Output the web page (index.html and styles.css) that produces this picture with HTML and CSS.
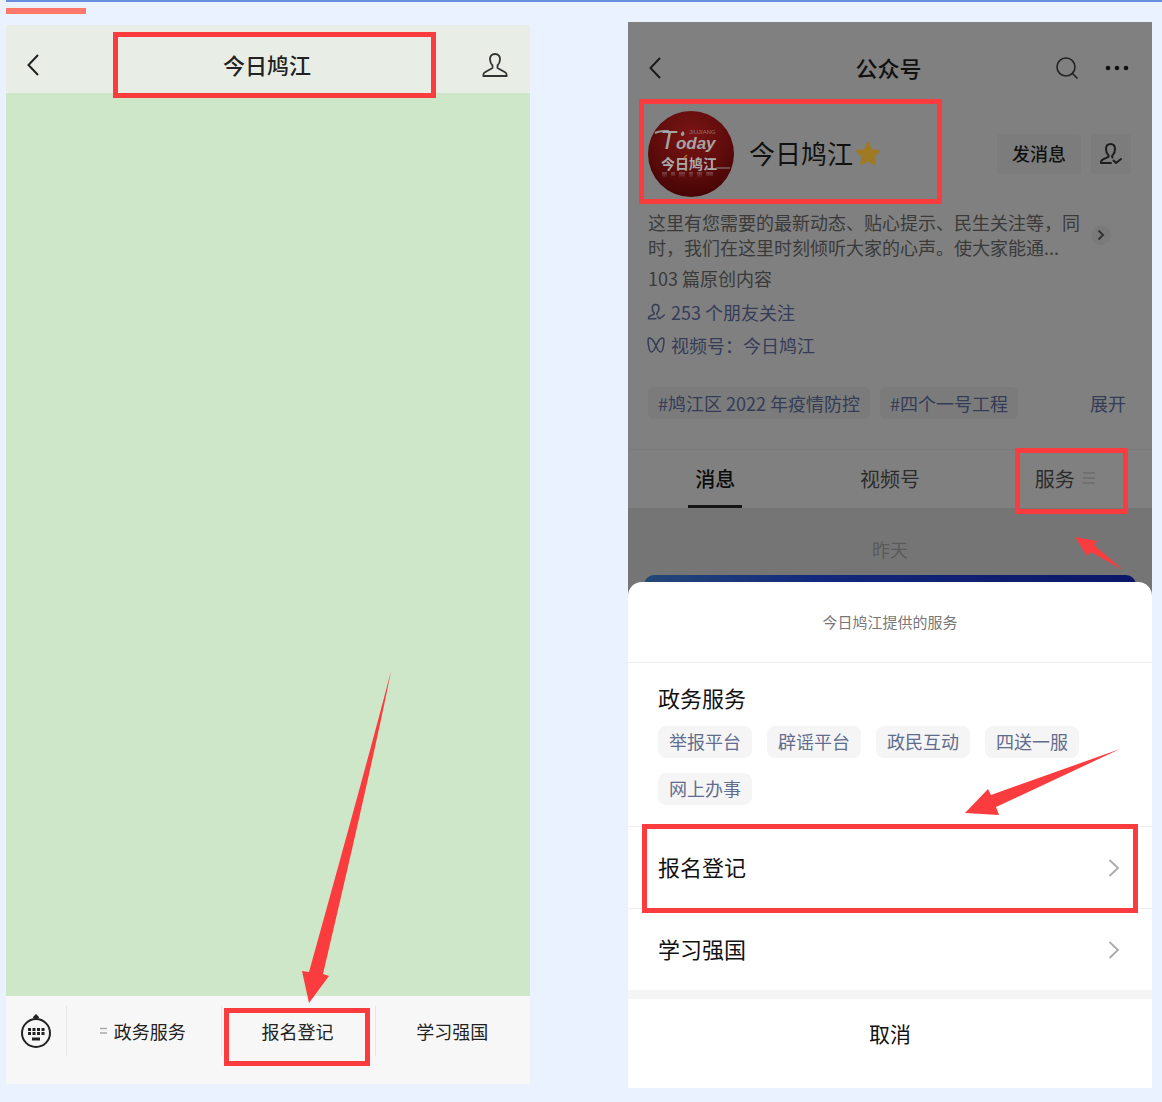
FILE: index.html
```
<!DOCTYPE html>
<html lang="zh-CN">
<head>
  <meta charset="UTF-8">
  <title>今日鸠江</title>
  <meta name="viewport" content="width=device-width, initial-scale=1" />
  <link rel="stylesheet" href="styles.css">
</head>
<body>
  <div class="top-line"></div>
  <div class="top-accent"></div>

  <main class="screens">
    <!-- chat screen -->
    <section class="phone chat">
      <header class="chat-header">
        <button class="icon-btn" aria-label="返回">
          <svg width="14" height="24" viewBox="0 0 14 24" fill="none" stroke="#222" stroke-width="2"><path d="M12 2 2.500 12 12 22"/></svg>
        </button>
        <h1>今日鸠江</h1>
        <button class="icon-btn" aria-label="资料">
          <svg width="26" height="26" viewBox="0 0 26 26" fill="none" stroke="#333" stroke-width="1.800" stroke-linejoin="round"><path d="M13 2C9.500 2 7.800 4.500 8 7.500c.2 3 1 4.500 2.500 6v2.500L2.500 20.500C1.500 21 1.300 22 1.300 24h23.400c0-2-.2-3-1.200-3.500L15.500 16v-2.500c1.500-1.500 2.300-3 2.500-6C18.200 4.500 16.500 2 13 2z"/></svg>
        </button>
      </header>
      <div class="chat-body"></div>
      <nav class="chat-menu">
        <button class="keyboard" aria-label="键盘">
          <svg width="32" height="36" viewBox="0 0 32 36" fill="none" stroke="#222" stroke-width="2">
            <circle cx="16" cy="20" r="14"/>
            <path d="M13.500 5 16 2.500 18.500 5" fill="#222"/>
            <path d="M8 16.500h3m1.500 0h3m1.500 0h3m1.500 0h3M8 20.500h3m1.500 0h3m1.500 0h3m1.500 0h3" stroke-width="3"/>
            <path d="M12 26h8" stroke-width="3"/>
          </svg>
        </button>
        <button class="menu-item">
          <svg width="7" height="8" viewBox="0 0 7 8" stroke="#aaa" stroke-width="1.500"><path d="M0 1.500h7M0 6h7"/></svg>
          政务服务
        </button>
        <button class="menu-item">报名登记</button>
        <button class="menu-item">学习强国</button>
      </nav>

      <div class="mark mark-title"></div>
      <div class="mark mark-menu"></div>
      <svg class="arrow arrow-long" width="90" height="332" viewBox="0 0 90 332"><path d="M89 0Q75 73 21 303l6 2L7 332 0 300l7 1Q67 85 89 0z"/></svg>
    </section>

    <!-- account screen with the service sheet open -->
    <section class="phone account">
      <header class="account-header">
        <button class="icon-btn" aria-label="返回">
          <svg width="14" height="24" viewBox="0 0 14 24" fill="none" stroke="#1a1a1a" stroke-width="2"><path d="M12 2 2.500 12 12 22"/></svg>
        </button>
        <h2>公众号</h2>
        <div class="header-tools">
          <button class="icon-btn" aria-label="搜索">
            <svg width="24" height="24" viewBox="0 0 24 24" fill="none" stroke="#222" stroke-width="1.600"><circle cx="11" cy="11" r="9"/><path d="m17.500 17.500 5 5"/></svg>
          </button>
          <button class="icon-btn" aria-label="更多">
            <svg width="24" height="24" viewBox="0 0 24 24" fill="#111"><circle cx="3" cy="12" r="2.300"/><circle cx="12" cy="12" r="2.300"/><circle cx="21" cy="12" r="2.300"/></svg>
          </button>
        </div>
      </header>

      <div class="profile">
        <svg class="avatar" width="86" height="86" viewBox="0 0 86 86" role="img" aria-label="Today 今日鸠江">
          <defs>
            <radialGradient id="red" cx="50%" cy="28%" r="70%"><stop offset="0" stop-color="#7a1414"/><stop offset="0.6" stop-color="#600c0c"/><stop offset="1" stop-color="#480505"/></radialGradient>
            <linearGradient id="shine" x1="0" y1="0" x2="0" y2="1"><stop offset="0" stop-color="#a08080" stop-opacity="0.5"/><stop offset="1" stop-color="#a08080" stop-opacity="0"/></linearGradient>
          </defs>
          <circle cx="43" cy="43" r="43" fill="url(#red)"/>
          <path d="M7 22q4-2 9-2h5" fill="none" stroke="#999" stroke-width="2"/>
          <text x="12" y="38"><tspan class="logo-t">T</tspan><tspan class="logo-en">oday</tspan></text>
          <text x="41" y="23" class="logo-tiny">JIUJIANG</text>
          <path d="M34 25q-3-2 1-5 3 3 0 5z" fill="#999"/>
          <text x="13" y="58" class="logo-cn">今日鸠江</text>
          <path d="M68 57h14" stroke="#888" stroke-width="1"/>
          <path d="M14 61h5v6h-5zm9 0h4v4h-4zm8 0h6v6h-6zm10 0h4v5h-4zm8 0h5v6h-5zm9 0h7v4h-7z" fill="url(#shine)"/>
          <path d="m36 47 3-3" stroke="#a35b26" stroke-width="2"/>
        </svg>
        <h3>今日鸠江</h3>
        <svg class="star" width="26" height="26" viewBox="0 0 26 26" fill="#9f7a22" stroke="#9f7a22" stroke-width="2" stroke-linejoin="round"><path d="m13 2 3.300 7 7.700 1-5.600 5.300 1.400 7.700L13 19.300 6.200 23l1.400-7.700L2 10l7.700-1z"/></svg>
        <button class="send">发消息</button>
        <button class="follow" aria-label="已关注">
          <svg width="24" height="24" viewBox="0 0 24 24" fill="none" stroke="#1c1c1c" stroke-width="2" stroke-linecap="round" stroke-linejoin="round"><path d="M12 21H2c0-2 .5-3 2-3.600l5-2.200c1-.6.8-1.700 0-2.600C7.500 11 7 9 7 7c0-3.500 2-5 4.500-5S16 3.500 16 7c0 2-.5 4-2 5.600-1 1-1.200 2-.5 2.900M14.500 18.500 17 21l5-4"/></svg>
        </button>
      </div>

      <div class="about">
        <p class="intro">这里有您需要的最新动态、贴心提示、民生关注等，同时，我们在这里时刻倾听大家的心声。使大家能通...</p>
        <button class="more" aria-label="详情">
          <svg width="8" height="12" viewBox="0 0 8 12" fill="none" stroke="#333" stroke-width="2"><path d="m1.500 1.500 4.500 4.500-4.500 4.500"/></svg>
        </button>
      </div>
      <p class="count">103 篇原创内容</p>
      <a class="info" href="#">
        <svg width="18" height="18" viewBox="0 0 24 24" fill="none" stroke="#343c57" stroke-width="2" stroke-linecap="round" stroke-linejoin="round"><path d="M12 21H2c0-2 .5-3 2-3.600l5-2.200c1-.6.8-1.700 0-2.600C7.500 11 7 9 7 7c0-3.500 2-5 4.500-5S16 3.500 16 7c0 2-.5 4-2 5.600-1 1-1.200 2-.5 2.900M14.500 18.500 17 21l6-5"/></svg>
        253 个朋友关注
      </a>
      <a class="info" href="#">
        <svg width="18" height="18" viewBox="0 0 18 18" fill="none" stroke="#343c57" stroke-width="1.500" stroke-linejoin="round"><path d="M9 10C7 5 4.500 2 2.500 2 .5 2 1 6 1.500 9.500 2 13 3 16 4.500 16S7.500 13.500 9 10c2-5 4.500-8 6.500-8s1.500 4 1 7.500S15 16 13.500 16 10.500 13.500 9 10z"/></svg>
        视频号：今日鸠江
      </a>

      <div class="topics">
        <a class="topic" href="#">#鸠江区 2022 年疫情防控</a>
        <a class="topic" href="#">#四个一号工程</a>
        <button class="expand">展开</button>
      </div>

      <nav class="tabs">
        <button class="tab active">消息</button>
        <button class="tab">视频号</button>
        <button class="tab">服务
          <svg width="12" height="12" viewBox="0 0 12 12" stroke="#6c6c6c" stroke-width="1.500"><path d="M0 1h12M0 6h12M0 11h12"/></svg>
        </button>
      </nav>

      <div class="feed">
        <span class="day">昨天</span>
        <div class="card"></div>
      </div>

      <div class="sheet">
        <p class="sheet-title">今日鸠江提供的服务</p>
        <div class="group">
          <h3>政务服务</h3>
          <div class="chips">
            <button class="chip">举报平台</button>
            <button class="chip">辟谣平台</button>
            <button class="chip">政民互动</button>
            <button class="chip">四送一服</button>
            <button class="chip">网上办事</button>
          </div>
        </div>
        <a class="row" href="#"><span>报名登记</span>
          <svg width="12" height="18" viewBox="0 0 12 18" fill="none" stroke="#aaa" stroke-width="1.800"><path d="m1.500 1 8.500 8-8.500 8"/></svg>
        </a>
        <a class="row" href="#"><span>学习强国</span>
          <svg width="12" height="18" viewBox="0 0 12 18" fill="none" stroke="#aaa" stroke-width="1.800"><path d="m1.500 1 8.500 8-8.500 8"/></svg>
        </a>
        <button class="cancel">取消</button>
      </div>

      <div class="mark mark-profile"></div>
      <div class="mark mark-service"></div>
      <div class="mark mark-row"></div>
      <svg class="arrow arrow-service" width="48" height="34" viewBox="0 0 48 34"><path d="m0 0 22 4-3 4 29 25-32-18-4 4z"/></svg>
      <svg class="arrow arrow-row" width="156" height="67" viewBox="0 0 156 67"><path d="M155 0 31 58l3 8-34-2 23-24 3 6z"/></svg>
    </section>
  </main>
</body>
</html>
```
FILE: styles.css
```
* { box-sizing: border-box; }
body { margin: 0; background: #ebf2ff; font-family: "Noto Sans CJK SC", sans-serif; font-size: 18px; color: #222; }
h1, h2, h3, p { margin: 0; font-weight: 400; }
button { border: 0; padding: 0; background: none; font: inherit; color: inherit; }
a { color: inherit; text-decoration: none; }
svg { display: block; flex: none; }

.top-line { height: 2px; margin-left: 6px; background: #6b8cd8; }
.top-accent { width: 80px; height: 6px; margin: 6px 0 8px 6px; background: #ff786b; }

.screens { display: grid; grid-template-columns: 1fr 1fr; gap: 98px; align-items: start; padding: 0 10px 14px 6px; }
.phone { position: relative; }
.icon-btn { display: flex; align-items: center; }

/* chat screen */
.chat { margin-top: 3px; }
.chat-header { display: grid; grid-template-columns: 1fr auto 1fr; align-items: center; height: 68px; padding: 12px 22px 0 20px; background: #e8ede6; }
.chat-header h1 { padding-bottom: 3px; font-size: 22px; line-height: 30px; font-weight: 500; }
.chat-header .icon-btn:last-child { justify-self: end; }
.chat-body { min-height: 903px; background: #cfe7c9; }
.chat-menu { display: flex; padding: 10px 0 28px; background: #f7f7f7; }
.keyboard { display: flex; justify-content: center; align-items: center; width: 60px; }
.menu-item { flex: 1; display: flex; justify-content: center; align-items: center; gap: 7px; height: 50px; padding-right: 2px; border-left: 1px solid #e6e6e6; }

/* account screen */
.account { background: #808080; color: #111; }
.account-header { display: grid; grid-template-columns: 1fr auto 1fr; align-items: center; height: 76px; padding: 16px 23px 0 20px; }
.account-header h2 { padding-bottom: 3px; font-size: 22px; line-height: 30px; font-weight: 500; }
.header-tools { display: flex; justify-content: flex-end; gap: 26px; }

.profile { display: flex; align-items: center; padding: 13px 21px 0 20px; }
.profile h3 { margin-left: 15px; padding-bottom: 3px; font-size: 26px; line-height: 36px; }
.star { margin-left: 2px; }
.logo-t { font: italic 26px "Liberation Sans", sans-serif; fill: #a5a5a5; }
.logo-en { font: italic bold 17px "Liberation Sans", sans-serif; fill: #a5a5a5; }
.logo-tiny { font: 6px "Liberation Sans", sans-serif; fill: #957070; }
.logo-cn { font: bold 14px "Noto Sans CJK SC", sans-serif; fill: #aaa; }
.send { width: 84px; height: 40px; margin-left: auto; padding-bottom: 2px; border-radius: 4px; background: #7c7c7c; font-weight: 500; }
.follow { display: flex; justify-content: center; align-items: center; width: 40px; height: 40px; margin-left: 10px; border-radius: 4px; background: #7c7c7c; }

.about { display: flex; align-items: center; gap: 8px; padding: 13px 41px 0 20px; color: #3a3a3a; }
.intro { flex: 1; line-height: 25px; }
.more { display: flex; justify-content: center; align-items: center; width: 20px; height: 20px; border-radius: 50%; background: #7a7a7a; }
.count { padding: 5px 20px; line-height: 26px; color: #3a3a3a; }
.info { display: flex; align-items: center; gap: 6px; padding: 3px 19px 4px; line-height: 26px; color: #343c57; }
.topics { display: flex; align-items: center; gap: 10px; padding: 25px 26px 30px 20px; color: #343c57; }
.topic { padding: 0 10px; border-radius: 6px; background: #7b7b7b; line-height: 32px; }
.expand { margin-left: auto; }

.tabs { display: grid; grid-template-columns: repeat(3, 1fr); border-top: 1px solid #7b7b7b; }
.tab { position: relative; display: flex; justify-content: center; align-items: center; gap: 8px; height: 58px; padding-bottom: 2px; font-size: 20px; color: #2c2c2c; }
.tab.active { font-weight: 500; color: #0c0c0c; }
.tab.active::after { content: ""; position: absolute; bottom: 0; width: 54px; height: 3px; background: #151515; }

.feed { padding: 28px 16px 0; background: #757575; text-align: center; color: #5a5a5a; }
.day { display: block; line-height: 26px; }
.card { height: 30px; margin-top: 13px; border-radius: 10px 10px 0 0; background: linear-gradient(90deg, #244878, #13287c 35%, #0b1766); }

.sheet { position: relative; margin-top: -23px; border-radius: 14px 14px 0 0; background: #fff; color: #111; }
.sheet-title { padding: 28px 0; border-bottom: 1px solid #eee; font-size: 15px; line-height: 24px; text-align: center; color: #777; }
.group { padding: 18px 30px 21px; }
.group h3 { font-size: 22px; line-height: 32px; }
.chips { display: flex; flex-wrap: wrap; gap: 15px; margin-top: 13px; }
.chip { height: 32px; padding: 0 11px 2px; border-radius: 8px; background: #f5f5f5; color: #626d8e; }
.row { display: flex; justify-content: space-between; align-items: center; height: 82px; padding: 0 32px 0 30px; border-top: 1px solid #eee; font-size: 22px; }
.row span { padding-bottom: 3px; }
.cancel { display: block; width: 100%; height: 98px; padding-bottom: 22px; border-top: 9px solid #f5f5f5; font-size: 21px; }

/* red boxes and arrows drawn over the screens */
.mark { position: absolute; border: 5px solid #fb3c3f; pointer-events: none; }
.mark-title { top: 7px; left: 107px; width: 323px; height: 66px; }
.mark-menu { top: 983px; left: 218px; width: 146px; height: 58px; }
.mark-profile { top: 77px; left: 11px; width: 303px; height: 105px; }
.mark-service { top: 426px; left: 387px; width: 113px; height: 66px; }
.mark-row { top: 802px; left: 14px; width: 496px; height: 89px; }
.arrow { position: absolute; fill: #fb3c3f; pointer-events: none; }
.arrow-long { top: 646px; left: 296px; }
.arrow-service { top: 515px; left: 447px; }
.arrow-row { top: 727px; left: 337px; }
```
